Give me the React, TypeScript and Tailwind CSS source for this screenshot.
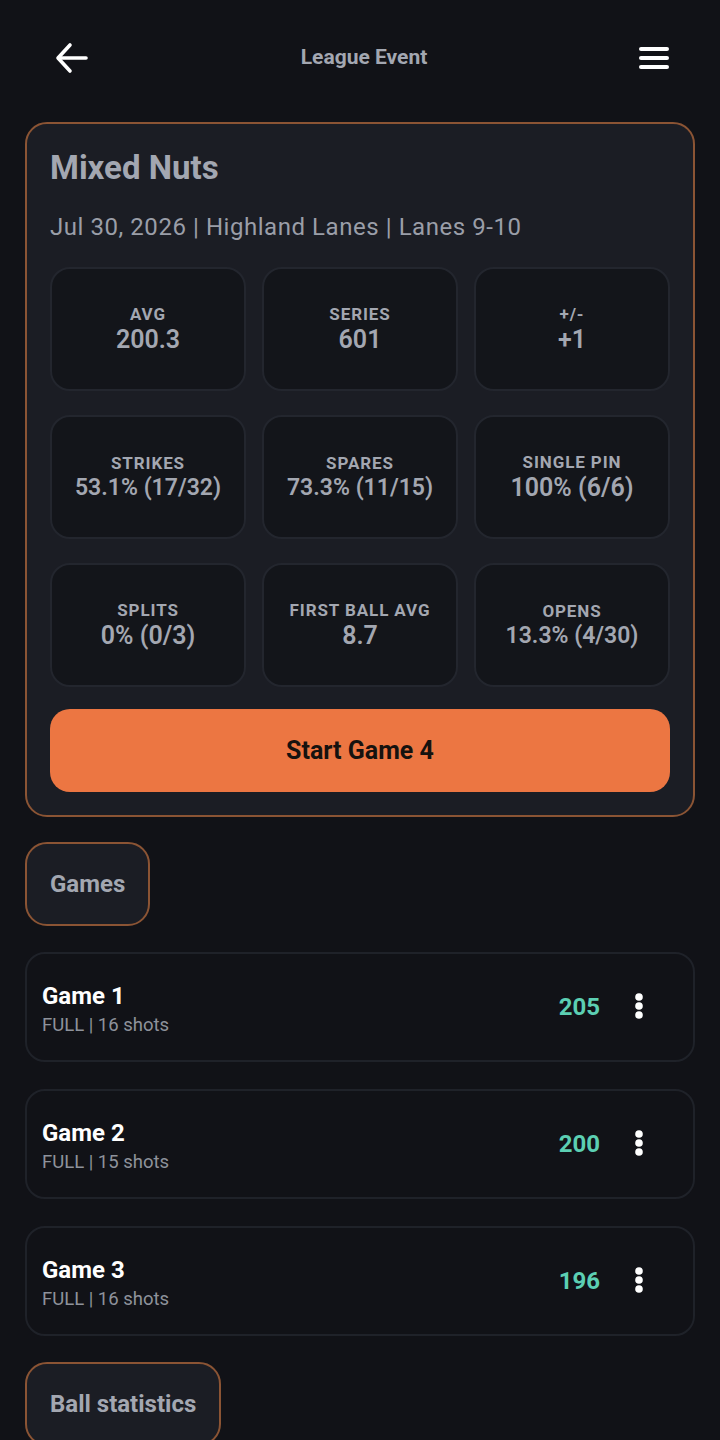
import { ReactNode } from 'react'

// big = values that render at the larger size in the app
const stats = [
  { label: 'AVG', value: '200.3', big: true },
  { label: 'SERIES', value: '601', big: true },
  { label: '+/-', value: '+1', big: true },
  { label: 'STRIKES', value: '53.1% (17/32)', big: false },
  { label: 'SPARES', value: '73.3% (11/15)', big: false },
  { label: 'SINGLE PIN', value: '100% (6/6)', big: true },
  { label: 'SPLITS', value: '0% (0/3)', big: true },
  { label: 'FIRST BALL AVG', value: '8.7', big: true },
  { label: 'OPENS', value: '13.3% (4/30)', big: false },
]

const games = [
  { name: 'Game 1', meta: 'FULL | 16 shots', score: 205 },
  { name: 'Game 2', meta: 'FULL | 15 shots', score: 200 },
  { name: 'Game 3', meta: 'FULL | 16 shots', score: 196 },
]

function SectionTab({ children }: { children: ReactNode }) {
  return (
    <div className="flex h-[84px] items-center rounded-[22px] border-2 border-[#8b5434] bg-[#1b1d24] px-[23px] text-[24px] font-bold text-[#a3a7b1]">
      {children}
    </div>
  )
}

function Dots() {
  return (
    <svg width="10" height="30" viewBox="0 0 10 30" fill="#ffffff">
      <circle cx="5" cy="5" r="3.8" />
      <circle cx="5" cy="14" r="3.8" />
      <circle cx="5" cy="23" r="3.8" />
    </svg>
  )
}

export default function App() {
  return (
    <div className="min-h-[1440px] bg-[#111217] px-[25px] font-['Roboto',sans-serif]">
      {/* Header */}
      <header className="flex h-[116px] items-center justify-between pl-[30px] pr-[26px]">
        <svg width="34" height="34" viewBox="0 0 34 34" fill="none" stroke="#ffffff" strokeWidth="3.6" strokeLinecap="round" strokeLinejoin="round">
          <path d="M31 17H4" />
          <path d="M15 4L3 17l12 13" />
        </svg>
        <h1 className="text-[21px] font-bold text-[#a3a7b1]">League Event</h1>
        <svg width="30" height="24" viewBox="0 0 30 24" fill="#ffffff">
          <rect x="0" y="1" width="30" height="4" rx="2" />
          <rect x="0" y="10" width="30" height="4" rx="2" />
          <rect x="0" y="19" width="30" height="4" rx="2" />
        </svg>
      </header>

      {/* Event summary */}
      <section className="mt-[6px] rounded-[22px] border-2 border-[#8b5434] bg-[#1b1d24] px-[23px] pb-[23px] pt-[25px]">
        <h2 className="text-[33px] leading-[38px] font-bold text-[#a3a7b1]">Mixed Nuts</h2>
        <p className="mt-[25px] text-[24px] leading-[30px] tracking-[0.55px] text-[#9a9ea8]">
          Jul 30, 2026 | Highland Lanes | Lanes 9-10
        </p>
        <div className="mt-[25px] grid grid-cols-3 gap-x-[16px] gap-y-[24px]">
          {stats.map(s => (
            <div
              key={s.label}
              className="flex h-[124px] flex-col items-center justify-center rounded-[20px] border-2 border-[#23262e] bg-[#13151a] text-[#a3a7b1]"
            >
              <div className="text-[17px] leading-[22px] font-bold tracking-[0.9px]">{s.label}</div>
              {s.big ? (
                <div className="text-[25px] leading-[30px] font-semibold">{s.value}</div>
              ) : (
                <div className="text-[23px] leading-[28px] font-semibold">{s.value}</div>
              )}
            </div>
          ))}
        </div>
        <button className="mt-[22px] flex h-[83px] w-full items-center justify-center rounded-[20px] bg-[#ec7642] text-[25px] font-bold text-[#16120f]">
          Start Game 4
        </button>
      </section>

      <div className="mt-[25px] flex">
        <SectionTab>Games</SectionTab>
      </div>

      {/* Games list */}
      <div className="mt-[26px] flex flex-col gap-[27px]">
        {games.map(g => (
          <div
            key={g.name}
            className="flex h-[110px] items-center rounded-[20px] border-2 border-[#1f2229] bg-[#111217] pl-[15px] pr-[39px]"
          >
            <div className="flex-1 pt-[4px]">
              <div className="text-[24px] leading-[30px] font-bold text-white">{g.name}</div>
              <div className="mt-[2px] text-[18.5px] leading-[24px] text-[#8e929b]">{g.meta}</div>
            </div>
            <div className="text-[24px] font-bold text-[#5ccfb3]">{g.score}</div>
            <div className="ml-[24px] flex w-[30px] justify-center">
              <Dots />
            </div>
          </div>
        ))}
      </div>

      <div className="mt-[26px] flex">
        <SectionTab>Ball statistics</SectionTab>
      </div>
    </div>
  )
}
